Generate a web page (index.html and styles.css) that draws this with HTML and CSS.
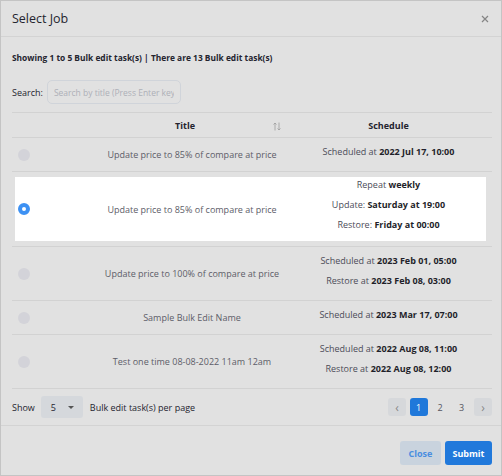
FILE: index.html
```html
<!doctype html>
<html>
<head>
<meta name="viewport" content="width=device-width, initial-scale=1.0">
<title>Select Job</title>
<link rel="stylesheet" href="styles.css">
</head>
<body>
<div class="modal">
    <div class="modal-header">
        <h2 class="modal-title">Select Job</h2>
        <svg class="modal-close" width="8" height="8" viewBox="0 0 8 8"><path d="M1 1L7 7M7 1L1 7" stroke="#858585" stroke-width="1.2" fill="none"/></svg>
    </div>
    <div class="modal-body">
        <div class="summary">Showing 1 to 5 Bulk edit task(s) | There are 13 Bulk edit task(s)</div>
        <div class="search">
            <label for="search_term">Search:</label>
            <input id="search_term" type="text" placeholder="Search by title (Press Enter key to search)" autocomplete="off">
        </div>

        <div class="jobs">
            <div class="jobs-head">
                <div></div>
                <div class="col-title">Title
                    <svg class="sort" width="8" height="9" viewBox="0 0 8 9"><path d="M2 8.5V1M0.5 2.5L2 1L3.5 2.5M6 0.5V8M4.5 6.5L6 8L7.5 6.5" stroke="#9c9c9c" stroke-width="0.8" fill="none"/></svg>
                </div>
                <div class="col-schedule">Schedule</div>
            </div>

            <div class="job">
                <div class="job-radio"><span class="radio"></span></div>
                <div class="job-title">Update price to 85% of compare at price</div>
                <div class="job-schedule">
                    <p>Scheduled at <b>2022 Jul 17, 10:00</b></p>
                </div>
            </div>

            <div class="job selected">
                <div class="job-inner">
                    <div class="job-radio"><span class="radio checked"></span></div>
                    <div class="job-title">Update price to 85% of compare at price</div>
                    <div class="job-schedule">
                        <p>Repeat <b>weekly</b></p>
                        <p>Update: <b>Saturday at 19:00</b></p>
                        <p>Restore: <b>Friday at 00:00</b></p>
                    </div>
                </div>
            </div>

            <div class="job">
                <div class="job-radio"><span class="radio"></span></div>
                <div class="job-title">Update price to 100% of compare at price</div>
                <div class="job-schedule">
                    <p>Scheduled at <b>2023 Feb 01, 05:00</b></p>
                    <p>Restore at <b>2023 Feb 08, 03:00</b></p>
                </div>
            </div>

            <div class="job">
                <div class="job-radio"><span class="radio"></span></div>
                <div class="job-title">Sample Bulk Edit Name</div>
                <div class="job-schedule">
                    <p>Scheduled at <b>2023 Mar 17, 07:00</b></p>
                </div>
            </div>

            <div class="job">
                <div class="job-radio"><span class="radio"></span></div>
                <div class="job-title">Test one time 08-08-2022 11am 12am</div>
                <div class="job-schedule">
                    <p>Scheduled at <b>2022 Aug 08, 11:00</b></p>
                    <p>Restore at <b>2022 Aug 08, 12:00</b></p>
                </div>
            </div>
        </div>

        <div class="pager">
            <span>Show</span>
            <div class="per-page">5 <span class="caret"></span></div>
            <span>Bulk edit task(s) per page</span>
            <div class="pages">
                <span class="page nav">&lsaquo;</span>
                <span class="page active">1</span>
                <span class="page">2</span>
                <span class="page">3</span>
                <span class="page nav">&rsaquo;</span>
            </div>
        </div>
    </div>
    <div class="modal-footer">
        <button class="btn btn-light">Close</button>
        <button class="btn btn-primary">Submit</button>
    </div>
</div>
</body>
</html>
```

FILE: styles.css
```css
* {
    box-sizing: border-box;
}
body {
    margin: 0;
    font-family: "Open Sans", sans-serif;
    color: #24242f;
    background: #e0e0e0;
}
.modal {
    width: 502px;
    height: 476px;
    border: 1px solid #c4c4c4;
    background: #e1e1e1;
    display: flex;
    flex-direction: column;
}

.modal-header {
    height: 36px;
    padding: 0 11px;
    display: flex;
    align-items: center;
    justify-content: space-between;
    border-bottom: 1px solid #d3d3d3;
}
.modal-title {
    margin: 0;
    font-size: 12.5px;
    font-weight: 500;
}
.modal-close {
    margin-right: 1px;
}

.modal-body {
    padding: 14px 9px 0 11px;
    flex: 1;
}
.summary {
    font-size: 8.4px;
    font-weight: 700;
    line-height: 13px;
}
.search {
    display: flex;
    align-items: center;
    margin-top: 16px;
    font-size: 9px;
}
.search label {
    margin-right: 4px;
}
.search input {
    width: 134px;
    height: 24px;
    padding: 0 6px;
    font-family: inherit;
    font-size: 8.5px;
    background: #e1e1e1;
    border: 1px solid #d0d4da;
    border-radius: 5px;
}
.search input::placeholder {
    color: #aeb0b8;
}

/* job list */
.jobs {
    margin-top: 8px;
    border-top: 1px solid #d2d2d2;
    font-size: 9px;
}
.jobs-head,
.job,
.job-inner {
    display: grid;
    grid-template-columns: 87px 186px 1fr;
    align-items: center;
}
.jobs-head {
    height: 25px;
    font-weight: 700;
    border-bottom: 1px solid #d2d2d2;
}
.col-title {
    text-align: center;
    padding-right: 14px;
    position: relative;
}
.sort {
    position: absolute;
    right: 4px;
    top: 3px;
}
.col-schedule {
    text-align: center;
}
.job {
    border-bottom: 1px solid #d2d2d2;
}
.job.selected {
    display: block;
    padding: 5px 6px 5px 3px;
}
.job-inner {
    background: #fff;
    grid-template-columns: 84px 186px 1fr;
}
.job-radio {
    padding-left: 6px;
    display: flex;
}
.selected .job-radio {
    padding-left: 3px;
}
.radio {
    width: 12px;
    height: 12px;
    border-radius: 50%;
    background: #d3d3d9;
}
.radio.checked {
    background: #fff;
    border: 4px solid #3d91f3;
}
.job-title {
    text-align: center;
    color: #5d5d68;
}
.job-schedule {
    text-align: center;
    padding: 7px 0 6px;
    color: #4c4c58;
}
.selected .job-schedule {
    padding: 1px 0 3px 6px;
}
.job-schedule p {
    margin: 0 0 7px;
    line-height: 13px;
}
.job-schedule b {
    color: #1f1f2a;
}

/* pagination */
.pager {
    display: flex;
    align-items: center;
    margin-top: 7px;
    font-size: 9px;
}
.per-page {
    width: 42px;
    height: 22px;
    margin: 0 7px 0 6px;
    padding-left: 10px;
    display: flex;
    align-items: center;
    background: #d5d8dc;
    border-radius: 3px;
}
.caret {
    margin-left: 12px;
    border-left: 3px solid transparent;
    border-right: 3px solid transparent;
    border-top: 3px solid #555;
}
.pages {
    margin-left: auto;
    display: flex;
    gap: 3.5px;
}
.page {
    width: 18px;
    height: 18px;
    display: flex;
    align-items: center;
    justify-content: center;
    border-radius: 3px;
    color: #55555f;
}
.page.nav {
    background: #d6d8db;
    color: #888;
    font-size: 12px;
}
.page.active {
    background: #1f78da;
    color: #fff;
}

.modal-footer {
    border-top: 1px solid #d3d3d3;
    height: 50px;
    padding: 15px 9px 0 0;
    display: flex;
    justify-content: flex-end;
    align-items: flex-start;
    gap: 4px;
}
.btn {
    height: 24px;
    border: 0;
    border-radius: 3px;
    font-family: inherit;
    font-size: 9px;
    font-weight: 700;
}
.btn-light {
    width: 41px;
    background: #c9d3de;
    color: #4a8ee0;
}
.btn-primary {
    width: 47px;
    background: #2179db;
    color: #fff;
}
```
